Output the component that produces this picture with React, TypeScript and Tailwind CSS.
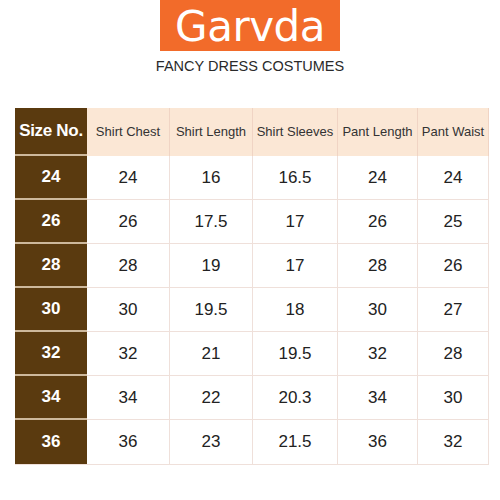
const headers = ["Shirt Chest", "Shirt Length", "Shirt Sleeves", "Pant Length", "Pant Waist"];

const rows: [string, string[]][] = [
  ["24", ["24", "16", "16.5", "24", "24"]],
  ["26", ["26", "17.5", "17", "26", "25"]],
  ["28", ["28", "19", "17", "28", "26"]],
  ["30", ["30", "19.5", "18", "30", "27"]],
  ["32", ["32", "21", "19.5", "32", "28"]],
  ["34", ["34", "22", "20.3", "34", "30"]],
  ["36", ["36", "23", "21.5", "36", "32"]],
];

export default function App() {
  return (
    <div className="flex h-[500px] w-[500px] flex-col bg-white font-['Liberation_Sans',Arial,sans-serif]">
      <div className="flex flex-col items-center">
        <div className="flex h-[51px] w-[180px] items-center justify-center bg-[#f26b2a]">
          <span className="mt-[2px] font-['DejaVu_Sans',sans-serif] text-[42px] leading-none tracking-[-0.5px] text-white">
            Garvda
          </span>
        </div>
        <p className="mt-[6px] text-[14.5px] leading-[18px] text-[#2a2a2a]">FANCY DRESS COSTUMES</p>
      </div>

      <div className="ml-[15px] mt-[33px] grid w-[474px] grid-cols-[72px_83px_83px_85px_80px_71px] border-b border-r border-[#efe0da]">
        <div className="flex h-[48px] items-center justify-center border-b-2 border-[#cdb89c] bg-[#5a3a0f] text-[17px] font-bold tracking-[-0.3px] text-white">
          Size No.
        </div>
        {headers.map((h) => (
          <div
            key={h}
            className="flex h-[48px] items-center justify-center border-r border-[#f0d4c4] bg-[#fbe7d5] text-[13px] text-[#333]"
          >
            {h}
          </div>
        ))}
        {rows.map(([size, vals], i) => (
          <Row key={size} size={size} vals={vals} last={i === rows.length - 1} />
        ))}
      </div>
    </div>
  );
}

function Row({ size, vals, last }: { size: string; vals: string[]; last: boolean }) {
  return (
    <>
      <div
        className={
          last
            ? "flex h-[44px] items-center justify-center bg-[#5a3a0f] text-[17px] font-bold text-white"
            : "flex h-[44px] items-center justify-center border-b-2 border-[#cdb89c] bg-[#5a3a0f] text-[17px] font-bold text-white"
        }
      >
        {size}
      </div>
      {vals.map((v, j) => (
        <div
          key={j}
          className={
            last
              ? "flex h-[44px] items-center justify-center border-r border-[#efe0da] text-[17px] text-[#222]"
              : "flex h-[44px] items-center justify-center border-b border-r border-[#efe0da] text-[17px] text-[#222]"
          }
        >
          {v}
        </div>
      ))}
    </>
  );
}
